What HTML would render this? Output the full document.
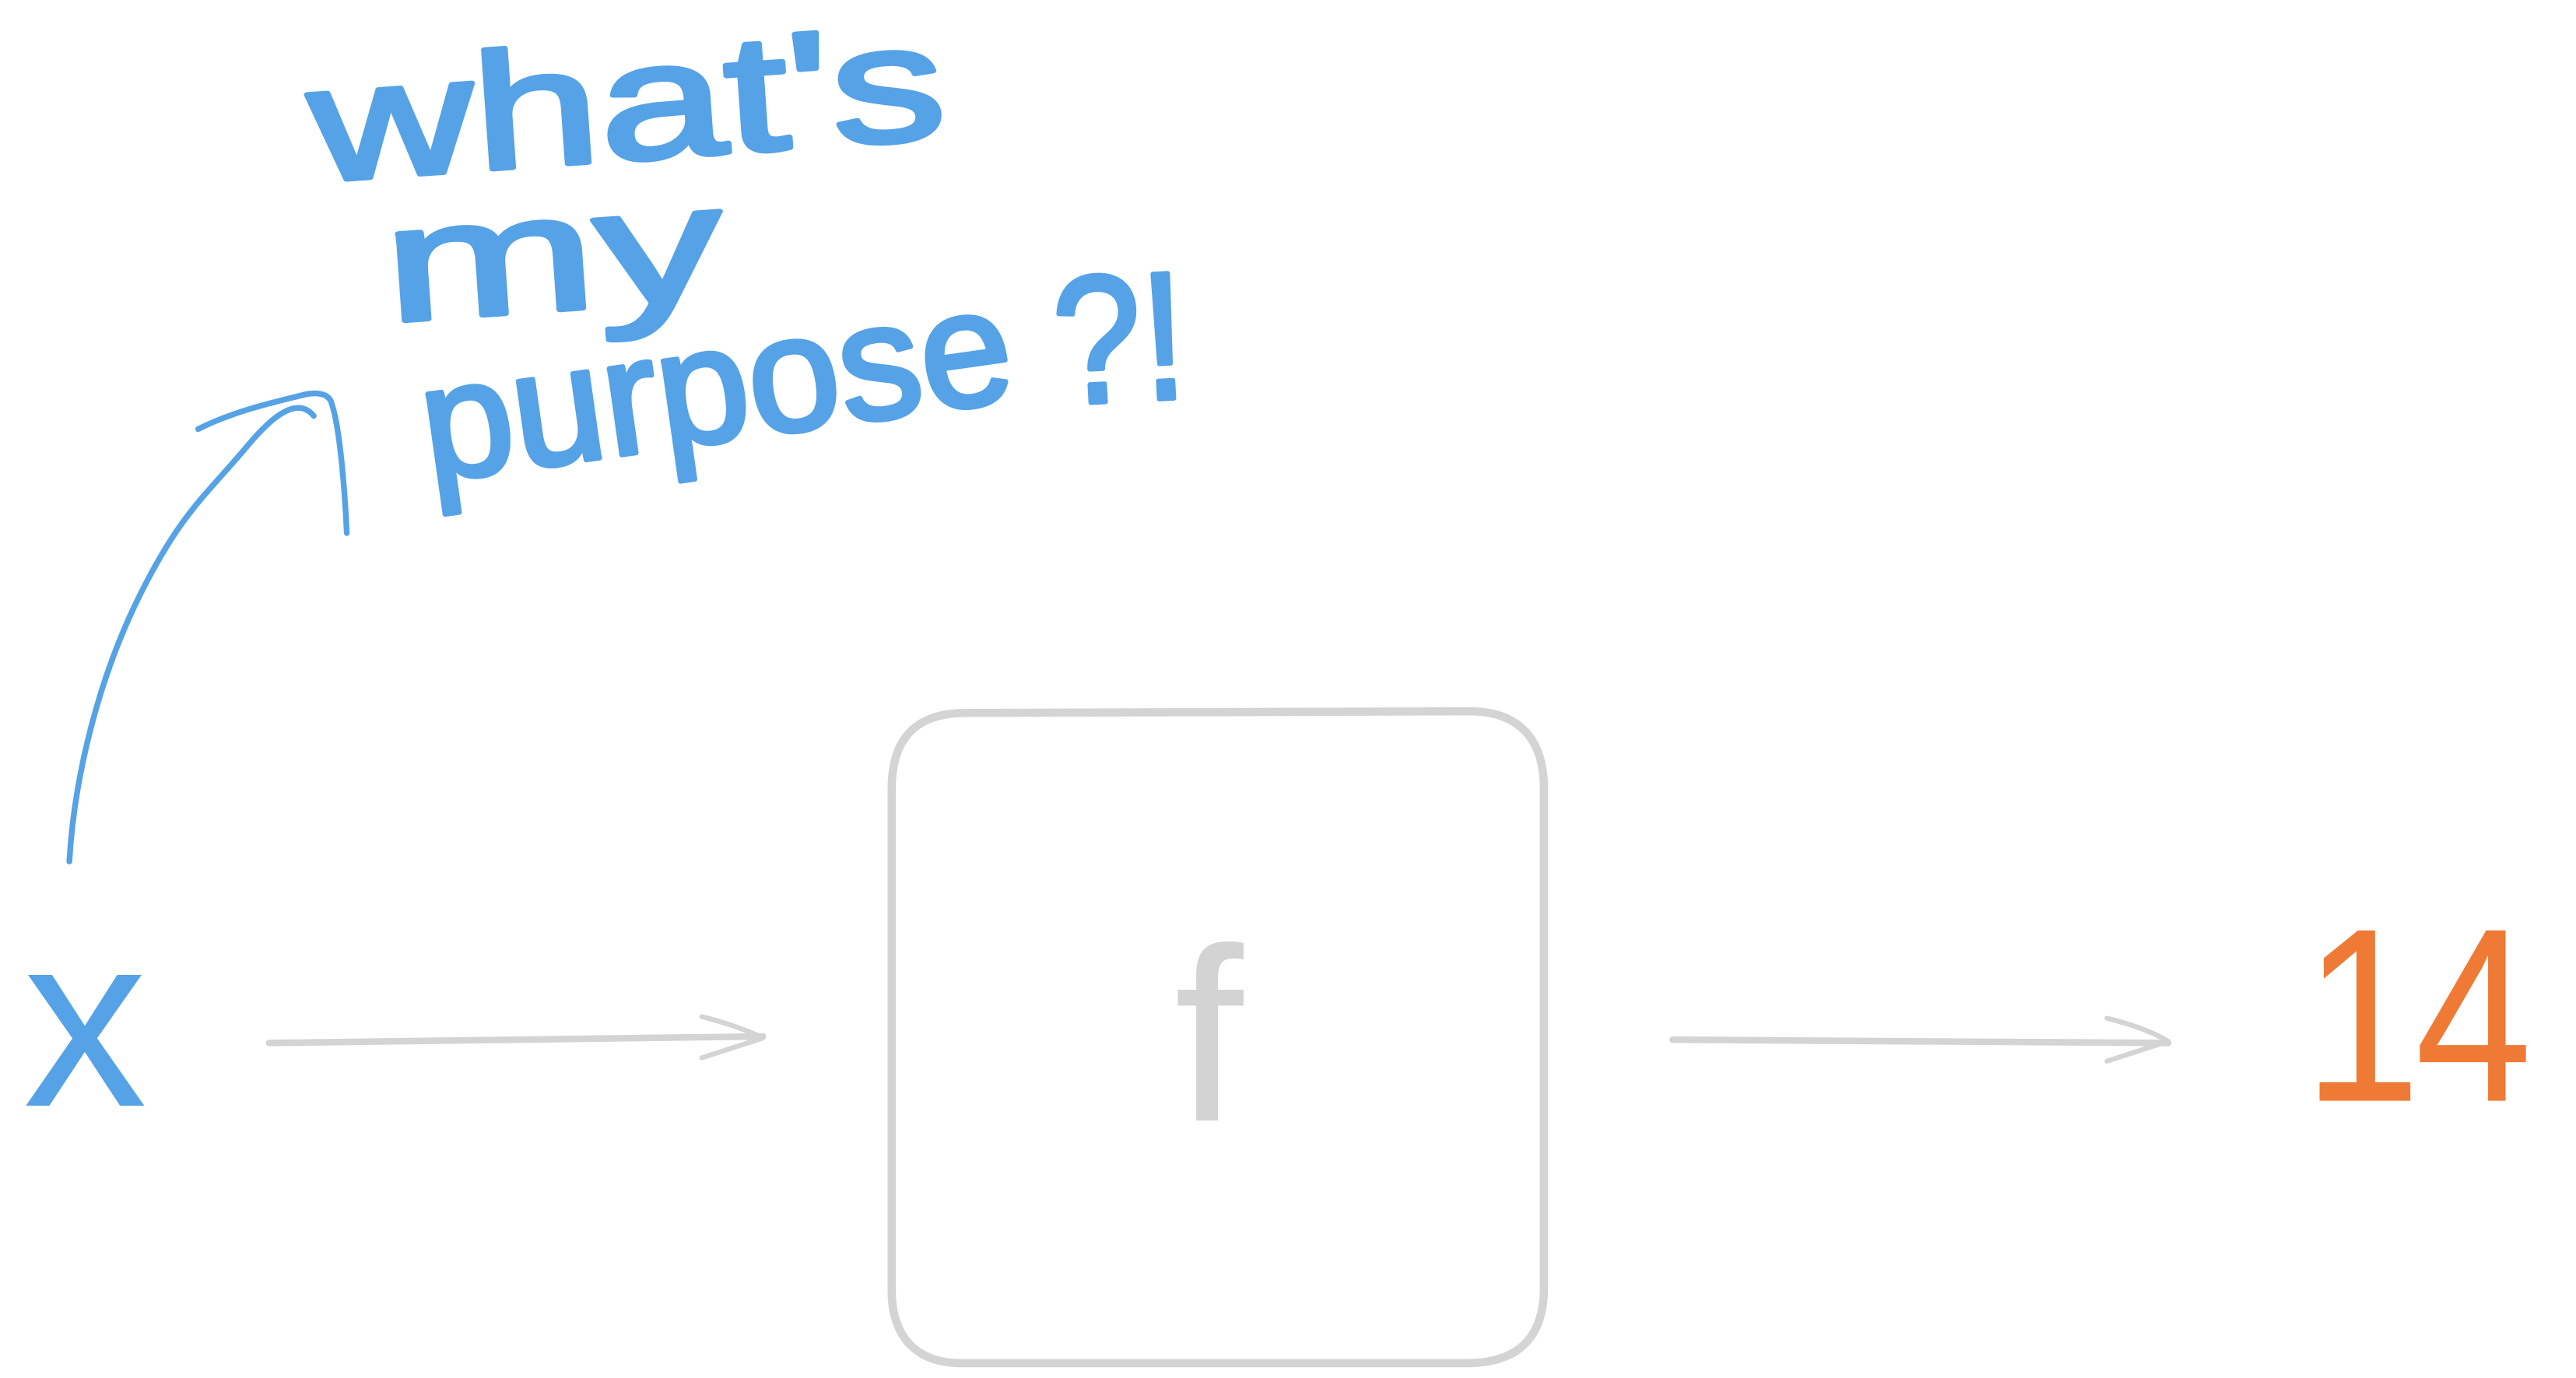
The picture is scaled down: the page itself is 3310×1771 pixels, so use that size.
<!DOCTYPE html>
<html><head><meta charset="utf-8"><style>
html,body{margin:0;padding:0;background:#fff;width:3310px;height:1771px;overflow:hidden}
svg{display:block}
</style></head><body>
<svg width="3310" height="1771" viewBox="0 0 1560 835" preserveAspectRatio="none" xmlns="http://www.w3.org/2000/svg">
<g fill="none" stroke-linecap="round" stroke-linejoin="round">
  <path d="M42 522 C45 470 60 410 85 360 C110 310 125 300 150 270 C165 252 180 240 190 252" stroke="#56a2e6" stroke-width="3.5"/>
  <path d="M120 260 C140 250 160 245 185 239 C195 237 200 240 201 245 C206 260 209 300 210 323" stroke="#56a2e6" stroke-width="3.5"/>
  <path d="M163 632 L462 628" stroke="#d4d4d4" stroke-width="4"/>
  <path d="M425 616 Q448 622 462 629 L425 641" stroke="#d4d4d4" stroke-width="3"/>
  <path d="M1013 630 L1313 632" stroke="#d4d4d4" stroke-width="4"/>
  <path d="M1276 617 Q1300 623 1313 631 L1276 643" stroke="#d4d4d4" stroke-width="3"/>
  <path d="M585 432 L890 431 C920 431 935 448 935 478 L935 780 C935 812 918 826 888 826 L582 826 C555 826 540 810 540 782 L540 478 C540 446 556 432 585 432 Z" stroke="#d4d4d4" stroke-width="5"/>
</g>
<g font-family="'Liberation Sans', sans-serif" fill="#56a2e6" stroke="#56a2e6" stroke-width="3" stroke-linejoin="round" stroke-linecap="round">
  <text x="190" y="110" font-size="100" textLength="385" lengthAdjust="spacingAndGlyphs" transform="rotate(-4 190 110)">what's</text>
  <text x="235" y="195" font-size="100" textLength="205" lengthAdjust="spacingAndGlyphs" transform="rotate(-4 235 195)">my</text>
  <text x="260" y="292" font-size="100" textLength="360" lengthAdjust="spacingAndGlyphs" transform="rotate(-8 260 292)">purpose</text>
  <text x="640" y="245" font-size="110" textLength="80" lengthAdjust="spacingAndGlyphs" transform="rotate(-3 640 245)">?!</text>
</g>
<text x="14" y="670" font-family="'Liberation Sans', sans-serif" font-size="150" fill="#56a2e6">x</text>
<text x="732" y="679" text-anchor="middle" font-family="'Liberation Sans', sans-serif" font-size="150" fill="#d3d3d3">f</text>
<text x="0" y="0" transform="translate(1395 667) scale(0.85 1)" font-family="'Liberation Sans', sans-serif" font-size="150" fill="#ef7a35" letter-spacing="-4">14</text>
</svg>
</body></html>
